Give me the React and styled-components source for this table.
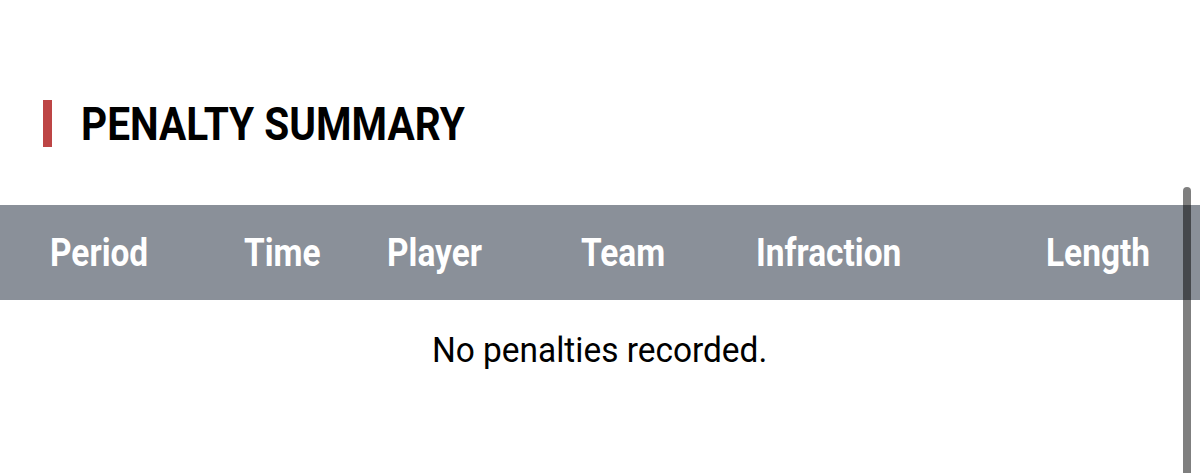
import React from 'react';
import styled, { createGlobalStyle } from 'styled-components';

const GlobalStyle = createGlobalStyle`
  html, body {
    margin: 0;
    padding: 0;
    background: #fff;
  }
  body {
    font-family: Roboto, 'Liberation Sans', sans-serif;
    color: #000;
    overflow: hidden;
  }
`;

const Page = styled.div`
  position: relative;
  width: 1200px;
  height: 473px;
  padding-top: 100px;
  box-sizing: border-box;
`;

const Heading = styled.div`
  display: flex;
  align-items: center;
  gap: 29px;
  padding-left: 43px;
  height: 47px;
`;

const Accent = styled.span`
  width: 9px;
  height: 47px;
  background: #bd4545;
`;

// Roboto Condensed isn't installed, so Roboto is narrowed to its width
const Title = styled.h2`
  margin: 0;
  font-size: 46px;
  font-weight: 700;
  line-height: 1;
  display: inline-block;
  transform: scaleX(${(p) => p.$sx});
  transform-origin: left center;
  white-space: nowrap;
`;

const HeaderRow = styled.div`
  margin-top: 58px;
  height: 95px;
  background: #8a9099;
  display: grid;
  grid-template-columns: 194px 143px 194px 175px 290px 1fr;
  align-items: center;
  padding-left: 50px;
`;

const HeadCell = styled.div`
  color: #fff;
  font-size: 38px;
  font-weight: 700;
  white-space: nowrap;
  display: inline-block;
  transform: scaleX(${(p) => p.$sx});
  transform-origin: left center;
`;

const EmptyRow = styled.div`
  display: flex;
  justify-content: center;
  padding-top: 30px;
`;

const EmptyText = styled.p`
  margin: 0;
  font-size: 35px;
  font-weight: 400;
  white-space: nowrap;
  display: inline-block;
  transform: scaleX(${(p) => p.$sx});
  transform-origin: center center;
`;

const Scrollbar = styled.div`
  position: absolute;
  left: 1183px;
  top: 187px;
  bottom: 0;
  width: 8px;
  border-radius: 4px 4px 0 0;
  background: rgba(0, 0, 0, 0.5);
`;

const columns = ['Period', 'Time', 'Player', 'Team', 'Infraction', 'Length'];

export default function App() {
  return (
    <Page>
      <GlobalStyle />
      <Heading>
        <Accent />
        <Title $sx={0.882}>PENALTY SUMMARY</Title>
      </Heading>
      <HeaderRow>
        {columns.map((c) => (
          <div key={c}>
            <HeadCell $sx={0.88}>{c}</HeadCell>
          </div>
        ))}
      </HeaderRow>
      <EmptyRow>
        <EmptyText $sx={0.955}>No penalties recorded.</EmptyText>
      </EmptyRow>
      <Scrollbar />
    </Page>
  );
}
